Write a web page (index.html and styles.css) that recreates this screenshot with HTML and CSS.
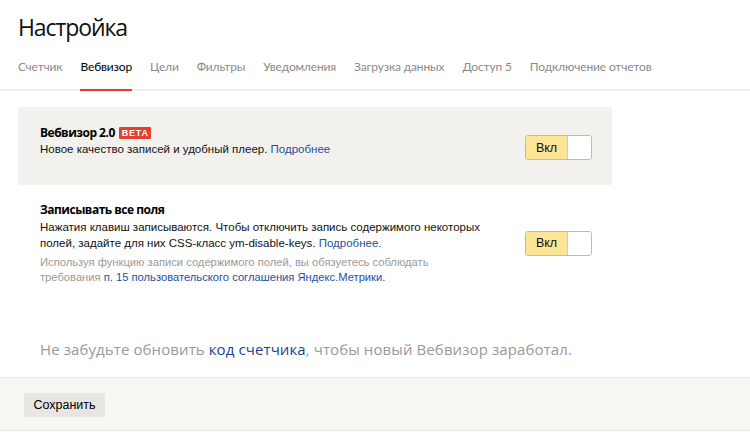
FILE: index.html
```html
<!DOCTYPE html>
<html lang="ru">
<head>
<meta charset="utf-8">
<link rel="stylesheet" href="styles.css">
</head>
<body>
<div class="page">
  <header class="header">
    <h1 class="title">Настройка</h1>
    <nav class="tabs">
      <span class="tab">Счетчик</span>
      <span class="tab tab-active">Вебвизор</span>
      <span class="tab">Цели</span>
      <span class="tab">Фильтры</span>
      <span class="tab">Уведомления</span>
      <span class="tab">Загрузка данных</span>
      <span class="tab">Доступ 5</span>
      <span class="tab">Подключение отчетов</span>
    </nav>
  </header>
  <main class="content">
    <section class="option option-card">
      <div class="option-text">
        <div class="option-title">Вебвизор 2.0 <span class="badge">BETA</span></div>
        <div class="option-desc">Новое качество записей и удобный плеер. <a class="link">Подробнее</a></div>
      </div>
      <div class="toggle"><span class="toggle-on">Вкл</span><span class="toggle-knob"></span></div>
    </section>
    <section class="option option-plain">
      <div class="option-text">
        <div class="option-title">Записывать все поля</div>
        <div class="option-desc">Нажатия клавиш записываются. Чтобы отключить запись содержимого некоторых полей, задайте для них CSS-класс ym-disable-keys. <a class="link">Подробнее.</a></div>
        <div class="option-note">Используя функцию записи содержимого полей, вы обязуетесь соблюдать требования <a class="link">п. 15 пользовательского соглашения Яндекс.Метрики.</a></div>
      </div>
      <div class="toggle"><span class="toggle-on">Вкл</span><span class="toggle-knob"></span></div>
    </section>
    <p class="notice">Не забудьте обновить <a class="notice-link">код счетчика</a>, чтобы новый Вебвизор заработал.</p>
  </main>
  <footer class="footer">
    <button class="save">Сохранить</button>
  </footer>
</div>
</body>
</html>
```
FILE: styles.css
```css
* { box-sizing: border-box; }
html, body { margin: 0; padding: 0; background: #fff; }
body { font-family: "Open Sans", "Noto Sans", sans-serif; color: #000; width: 750px; height: 432px; overflow: hidden; }

.header { border-bottom: 2px solid #efefef; }
.title { margin: 0; padding: 11px 18px 0; font-family: "Open Sans", sans-serif; font-size: 23px; font-weight: 400; line-height: 33px; color: #111; letter-spacing: -1.1px; }
.tabs { display: flex; gap: 18px; padding: 0 18px; margin-top: 14px; }
.tab { font-family: "Lato", "Open Sans", sans-serif; font-size: 12px; color: #8a8a8a; line-height: 18px; padding: 0 0 13px; margin-bottom: -2px; border-bottom: 2px solid transparent; letter-spacing: -0.15px; }
.tab-active { color: #000; border-bottom-color: #f0352a; }

.content { padding: 16px 0 0 18px; }
.option { width: 594px; display: flex; align-items: center; padding: 0 20px 0 22px; }
.option-card { background: #f2f1ee; height: 78px; border-radius: 2px; align-items: flex-start; padding-top: 17px; }
.option-card .toggle { margin-top: 11px; }
.option-plain { padding-top: 16px; padding-bottom: 18px; }
.option-plain .option-desc { margin-top: 1px; }
.option-text { flex: 1; }
.option-title { font-family: "Open Sans", sans-serif; font-weight: 700; font-size: 12px; line-height: 17px; color: #000; display: flex; align-items: center; gap: 4px; letter-spacing: -0.5px; }
.badge { background: #e3402d; color: #fff; font-size: 9px; font-weight: 700; letter-spacing: 0.8px; padding: 0 2px 0 3px; line-height: 12px; border-radius: 1px; font-family: "Liberation Sans", sans-serif; }
.option-desc { font-family: "Liberation Sans", Arial, sans-serif; font-size: 11.5px; line-height: 16px; margin-top: 0; color: #111; max-width: 450px; }
.option-note { font-family: "Liberation Sans", Arial, sans-serif; font-size: 11.2px; line-height: 15px; margin-top: 4px; color: #9a9a9a; max-width: 425px; }
.link { color: #1f4f9a; text-decoration: none; }

.toggle { display: flex; width: 67px; height: 25px; border: 1px solid #c7bc93; border-radius: 3px; overflow: hidden; flex: none; }
.toggle-on { width: 42px; background: #fde597; font-family: "Liberation Sans", Arial, sans-serif; font-size: 12.5px; display: flex; align-items: center; justify-content: center; color: #111; border-right: 1px solid #d8cda2; }
.toggle-knob { flex: 1; background: #fff; }

.notice { margin: 36px 0 0 22px; font-family: "Open Sans", sans-serif; font-size: 15px; color: #999; line-height: 20px; letter-spacing: 0.1px; }
.notice-link { color: #1c3f94; }

.footer { position: absolute; left: 0; top: 377px; width: 750px; height: 54px; background: #f6f6f3; border-top: 1px solid #ebebe8; border-bottom: 1px solid #e4e4e0; padding: 14px 24px; }
.save { width: 81px; height: 24px; background: #e7e6e3; border: none; border-radius: 2px; font-family: "Liberation Sans", Arial, sans-serif; font-size: 12.5px; color: #000; padding: 0; }
```
